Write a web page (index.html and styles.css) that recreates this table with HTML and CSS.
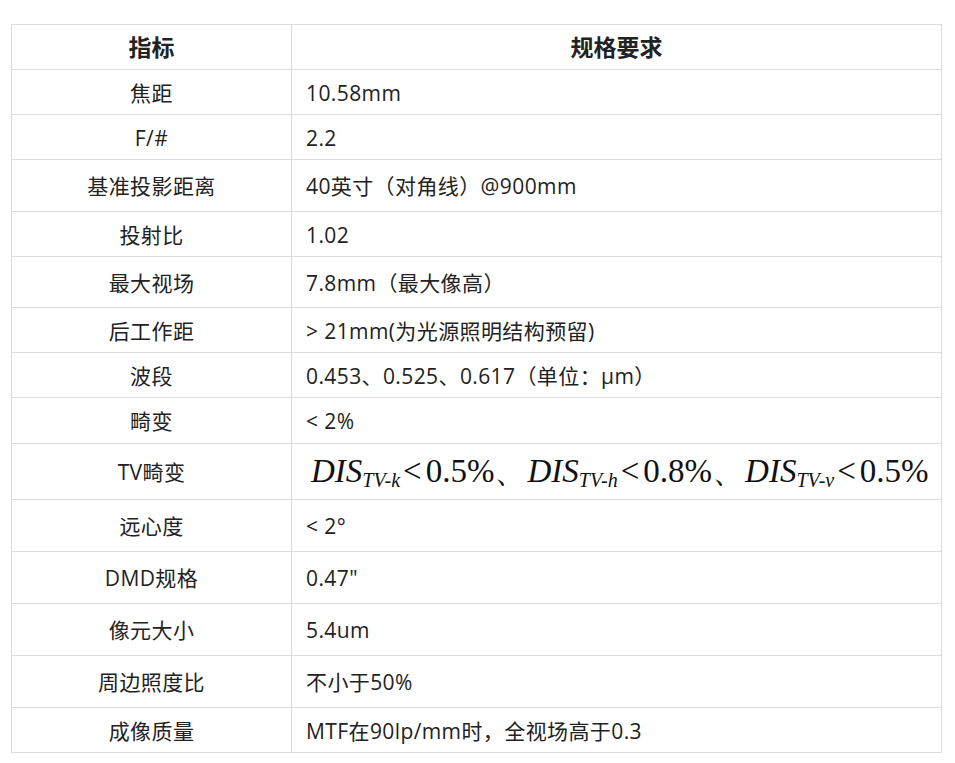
FILE: index.html
```html
<!DOCTYPE html>
<html lang="zh">
<head>
<meta charset="utf-8">
<link rel="stylesheet" href="styles.css">
</head>
<body>
<table class="spec">
  <colgroup><col class="c1"><col class="c2"></colgroup>
  <tr class="r45 head"><th>指标</th><th class="right">规格要求</th></tr>
  <tr class="r45"><td>焦距</td><td>10.58mm</td></tr>
  <tr class="r45"><td>F/#</td><td>2.2</td></tr>
  <tr class="r52"><td>基准投影距离</td><td>40英寸（对角线）@900mm</td></tr>
  <tr class="r45"><td>投射比</td><td>1.02</td></tr>
  <tr class="r51"><td>最大视场</td><td>7.8mm（最大像高）</td></tr>
  <tr class="r45"><td>后工作距</td><td>&gt; 21mm(为光源照明结构预留)</td></tr>
  <tr class="r45"><td>波段</td><td>0.453、0.525、0.617（单位：μm）</td></tr>
  <tr class="r46"><td>畸变</td><td>&lt; 2%</td></tr>
  <tr class="r56"><td>TV畸变</td><td class="formula"><i>DIS</i><sub><i>TV-k</i></sub><span class="lt">&lt;</span>0.5%、<i>DIS</i><sub><i>TV-h</i></sub><span class="lt">&lt;</span>0.8%、<i>DIS</i><sub><i>TV-v</i></sub><span class="lt">&lt;</span>0.5%</td></tr>
  <tr class="r52"><td>远心度</td><td>&lt; 2°</td></tr>
  <tr class="r52"><td>DMD规格</td><td>0.47"</td></tr>
  <tr class="r52"><td>像元大小</td><td>5.4um</td></tr>
  <tr class="r52"><td>周边照度比</td><td>不小于50%</td></tr>
  <tr class="r45"><td>成像质量</td><td>MTF在90lp/mm时，全视场高于0.3</td></tr>
</table>
</body>
</html>
```
FILE: styles.css
```css
html, body {
  margin: 0;
  padding: 0;
  background: #fff;
}
body {
  padding: 24px 0 0 11px;
  font-family: "Open Sans", "Noto Sans CJK SC", sans-serif;
  color: #222;
}
.spec {
  border-collapse: collapse;
  table-layout: fixed;
  width: 931px;
  font-size: 21px;
  letter-spacing: 0.4px;
}
.c1 { width: 280px; }
.spec th, .spec td {
  border: 1px solid #dcdcdc;
  padding: 3px 14px 0;
  vertical-align: middle;
  line-height: 1.3;
}
.spec td:first-child, .spec th:first-child {
  text-align: center;
}
.spec td + td { text-align: left; }
.spec th { font-weight: bold; font-size: 23px; letter-spacing: 0; padding-top: 1px; }
.spec th.right { text-align: center; }
.r45 { height: 45px; }
.r46 { height: 46px; }
.r51 { height: 51px; }
.r52 { height: 52px; }
.r56 { height: 56px; }
.spec td.formula {
  font-family: "Liberation Serif", serif;
  font-size: 33px;
  letter-spacing: 0;
  color: #111;
  white-space: nowrap;
  padding: 0 0 0 19px;
}
.formula sub {
  font-size: 20px;
  vertical-align: -5px;
  line-height: 0;
}
.formula .lt { margin: 0 4px 0 3px; }
```
